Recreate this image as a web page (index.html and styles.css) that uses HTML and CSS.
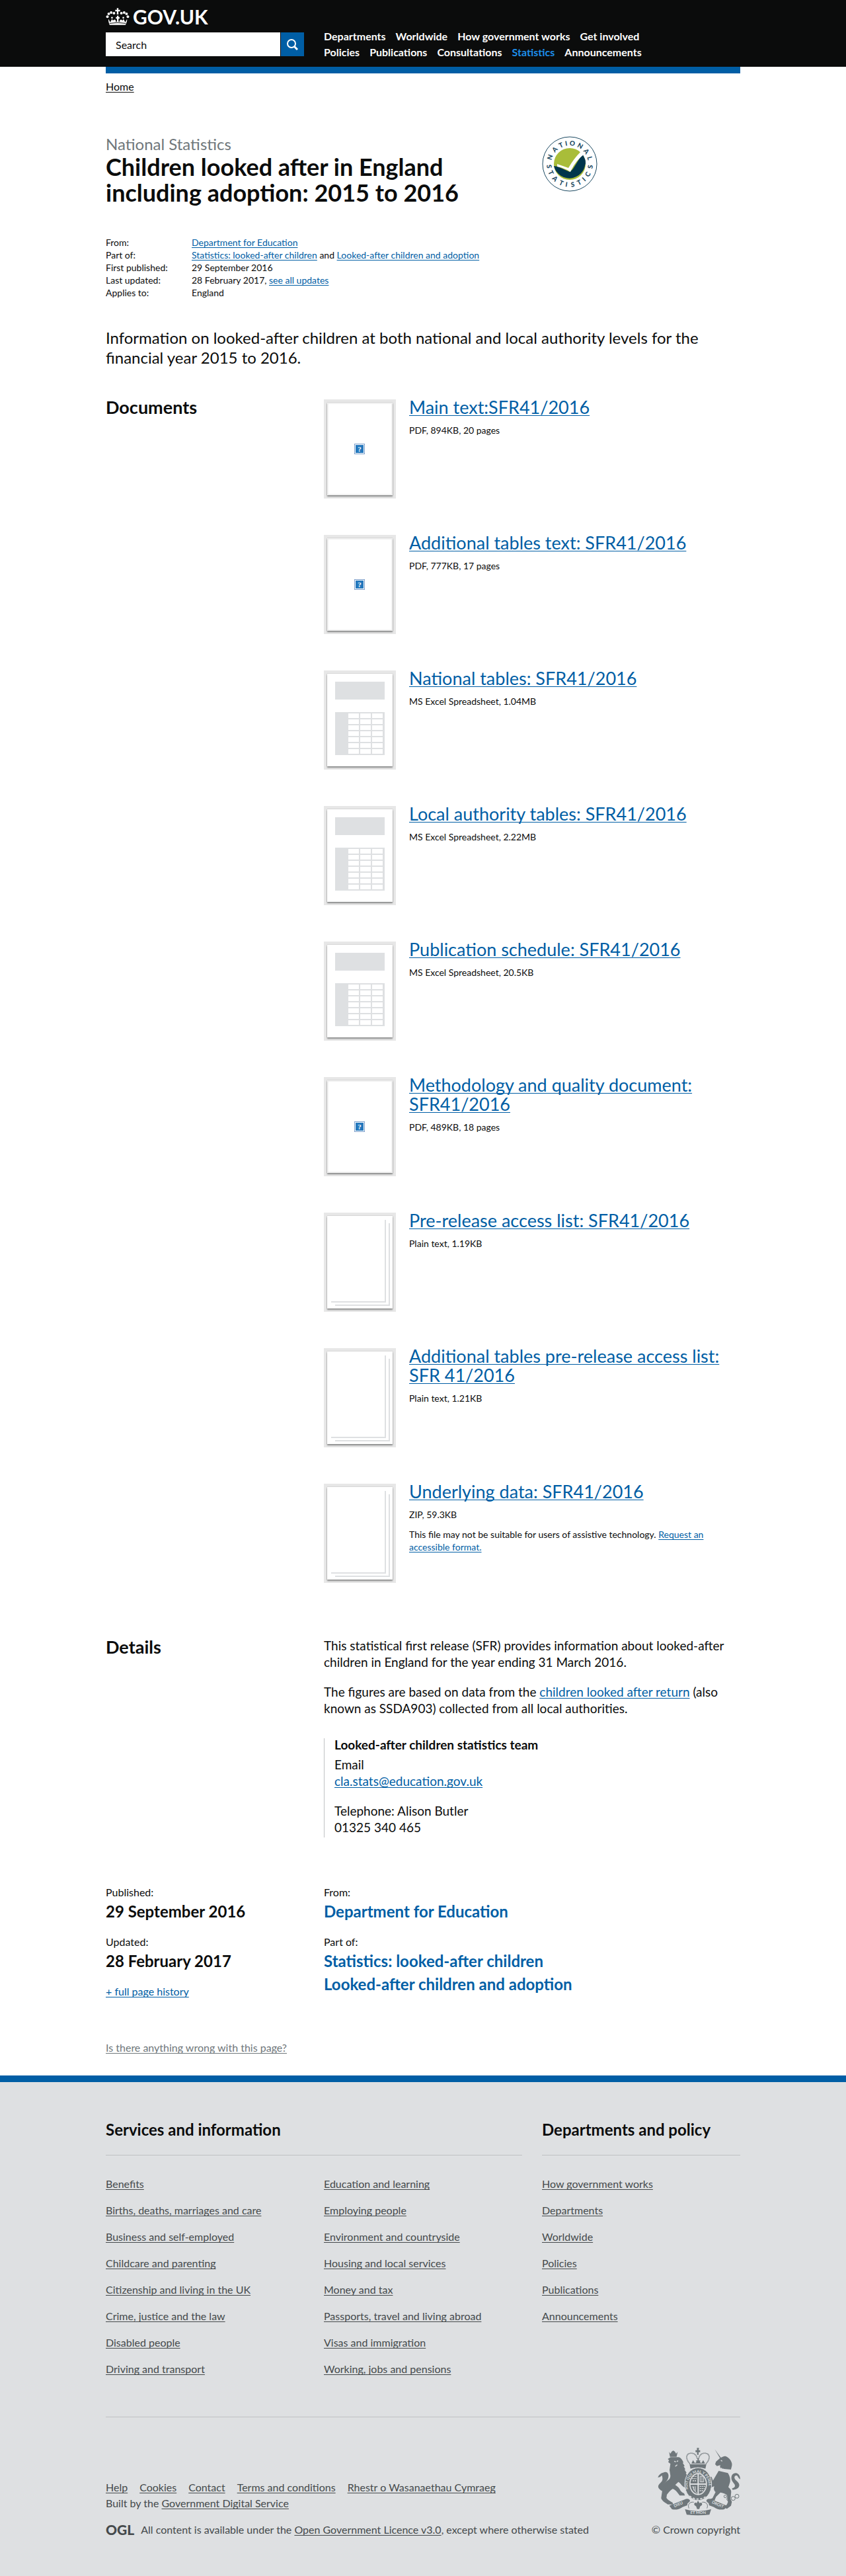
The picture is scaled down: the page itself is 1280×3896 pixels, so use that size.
FILE: index.html
```html
<!DOCTYPE html>
<html lang="en">
<head>
<meta charset="utf-8">
<meta name="viewport" content="width=device-width, initial-scale=1">
<title>Children looked after in England including adoption: 2015 to 2016 - GOV.UK</title>
<link rel="stylesheet" href="styles.css">
</head>
<body>
<header class="site-header">
  <div class="container site-header-grid">
    <div>
      <a class="site-logo" href="#">
        <svg class="site-crown" viewBox="30 36 108 79" aria-hidden="true">
          <g fill="#fff">
            <path d="M42 87l8 15 8-15 4 7 8-5 6 5-2 5 7 0V85h-5v-7h5v-6h7v6h5v7h-5v14h7l-2-5 6-5 8 5 4-7 8 15 8-15c2 8-3 19-7 27H47C44 106 40 95 42 87z"/>
            <path d="M80 37h8l-1 7h8v8h-8l1 14h-8l1-14h-8v-8h8z"/>
            <circle cx="37" cy="76" r="6"/><circle cx="43" cy="63" r="6"/><circle cx="54" cy="57" r="6"/><circle cx="67" cy="60" r="6"/>
            <circle cx="101" cy="60" r="6"/><circle cx="114" cy="57" r="6"/><circle cx="125" cy="63" r="6"/><circle cx="131" cy="76" r="6"/>
            <circle cx="58" cy="81" r="4"/><circle cx="110" cy="81" r="4"/>
          </g>
          <path d="M47 107q37-7 74 0" fill="none" stroke="#0b0c0c" stroke-width="3"/>
        </svg>
        <span>GOV.UK</span>
      </a>
      <form class="search" role="search">
        <input class="search-input" type="search" placeholder="Search" aria-label="Search">
        <button class="search-button" type="submit" aria-label="Search">
          <svg viewBox="0 0 17 17" width="17" height="17" aria-hidden="true"><circle cx="7" cy="7" r="6" fill="none" stroke="#fff" stroke-width="2"/><path d="M11 11l5 5" stroke="#fff" stroke-width="3"/></svg>
        </button>
      </form>
    </div>
    <nav class="site-nav" aria-label="Departments and policy">
      <a href="#">Departments</a>
      <a href="#">Worldwide</a>
      <a href="#">How government works</a>
      <a href="#">Get involved</a>
      <a href="#">Policies</a>
      <a href="#">Publications</a>
      <a href="#">Consultations</a>
      <a class="active" href="#">Statistics</a>
      <a href="#">Announcements</a>
    </nav>
  </div>
</header>

<main class="container">
  <div class="header-bar"></div>
  <nav class="breadcrumb" aria-label="Breadcrumb"><a href="#">Home</a></nav>

  <div class="columns title-block">
    <div class="span-two">
      <p class="context">National Statistics</p>
      <h1>Children looked after in England including adoption: 2015 to 2016</h1>
    </div>
    <svg class="stats-badge" viewBox="0 0 84 84" role="img" aria-label="National Statistics">
      <circle cx="42" cy="42" r="41" fill="#fff" stroke="#1c4a62" stroke-width="1"/>
      <circle cx="42" cy="42" r="24" fill="#a9bd39"/>
      <path d="M18 45L24 46L42 54L65 34A24 24 0 0 1 18 45z" fill="#00364c"/>
      <path d="M61 27A24 24 0 0 1 66 42L44 54z" fill="#00364c"/>
      <path d="M23 42L40 48Q48 34 59 23L64 27Q50 38 43 54Q34 48 23 46z" fill="#fff"/>
      <g class="badge-letters">
        <text x="42" y="14" transform="rotate(-71 42 42)">N</text>
        <text x="42" y="14" transform="rotate(-46 42 42)">A</text>
        <text x="42" y="14" transform="rotate(-25 42 42)">T</text>
        <text x="42" y="14" transform="rotate(-10 42 42)">I</text>
        <text x="42" y="14" transform="rotate(7 42 42)">O</text>
        <text x="42" y="14" transform="rotate(30 42 42)">N</text>
        <text x="42" y="14" transform="rotate(53 42 42)">A</text>
        <text x="42" y="14" transform="rotate(74 42 42)">L</text>
        <text x="42" y="77" transform="rotate(83 42 42)">S</text>
        <text x="42" y="77" transform="rotate(65 42 42)">T</text>
        <text x="42" y="77" transform="rotate(45 42 42)">A</text>
        <text x="42" y="77" transform="rotate(24 42 42)">T</text>
        <text x="42" y="77" transform="rotate(9 42 42)">I</text>
        <text x="42" y="77" transform="rotate(-8 42 42)">S</text>
        <text x="42" y="77" transform="rotate(-27 42 42)">T</text>
        <text x="42" y="77" transform="rotate(-43 42 42)">I</text>
        <text x="42" y="77" transform="rotate(-60 42 42)">C</text>
        <text x="42" y="77" transform="rotate(-82 42 42)">S</text>
      </g>
    </svg>
  </div>

  <dl class="metadata">
    <dt>From:</dt><dd><a href="#">Department for Education</a></dd>
    <dt>Part of:</dt><dd><a href="#">Statistics: looked-after children</a> and <a href="#">Looked-after children and adoption</a></dd>
    <dt>First published:</dt><dd>29 September 2016</dd>
    <dt>Last updated:</dt><dd>28 February 2017, <a href="#">see all updates</a></dd>
    <dt>Applies to:</dt><dd>England</dd>
  </dl>

  <p class="summary">Information on looked-after children at both national and local authority levels for the financial year 2015 to 2016.</p>

  <svg class="symbols" aria-hidden="true">
    <symbol id="missing" viewBox="0 0 99 140">
      <rect x="1" y="1" width="97" height="138" fill="none" stroke="#e3e3e3"/>
      <rect x="41.500" y="62.500" width="15" height="15" fill="#fff" stroke="#7c9fcb"/>
      <rect x="43" y="64" width="12" height="12" fill="#2478bd"/>
      <text x="49" y="74" text-anchor="middle" class="missing-mark">?</text>
    </symbol>
    <symbol id="sheet" viewBox="0 0 99 140">
      <path fill="#dee0e2" d="M12 12h75v27H12zM12 58h75v65H12z"/>
      <path fill="none" stroke="#fff" stroke-width="7" stroke-dasharray="16 2" d="M32 63.500h53M32 72.500h53M32 81.500h53M32 90.500h53M32 99.500h53M32 108.500h53M32 117.500h53"/>
    </symbol>
    <symbol id="pages" viewBox="0 0 99 140">
      <path fill="none" stroke="#dee0e2" stroke-width="2" d="M88 6v124H6M94 11v124H12"/>
    </symbol>
  </svg>

  <section class="columns">
    <h2>Documents</h2>
    <div class="span-two documents">
      <article class="document">
        <a class="thumb" href="#" aria-label="Main text"><svg><use href="#missing"/></svg></a>
        <div><h3><a href="#">Main text:SFR41/2016</a></h3><p>PDF, 894KB, 20 pages</p></div>
      </article>
      <article class="document">
        <a class="thumb" href="#" aria-label="Additional tables text"><svg><use href="#missing"/></svg></a>
        <div><h3><a href="#">Additional tables text: SFR41/2016</a></h3><p>PDF, 777KB, 17 pages</p></div>
      </article>
      <article class="document">
        <a class="thumb" href="#" aria-label="National tables"><svg><use href="#sheet"/></svg></a>
        <div><h3><a href="#">National tables: SFR41/2016</a></h3><p>MS Excel Spreadsheet, 1.04MB</p></div>
      </article>
      <article class="document">
        <a class="thumb" href="#" aria-label="Local authority tables"><svg><use href="#sheet"/></svg></a>
        <div><h3><a href="#">Local authority tables: SFR41/2016</a></h3><p>MS Excel Spreadsheet, 2.22MB</p></div>
      </article>
      <article class="document">
        <a class="thumb" href="#" aria-label="Publication schedule"><svg><use href="#sheet"/></svg></a>
        <div><h3><a href="#">Publication schedule: SFR41/2016</a></h3><p>MS Excel Spreadsheet, 20.5KB</p></div>
      </article>
      <article class="document">
        <a class="thumb" href="#" aria-label="Methodology and quality document"><svg><use href="#missing"/></svg></a>
        <div><h3><a href="#">Methodology and quality document: SFR41/2016</a></h3><p>PDF, 489KB, 18 pages</p></div>
      </article>
      <article class="document">
        <a class="thumb" href="#" aria-label="Pre-release access list"><svg><use href="#pages"/></svg></a>
        <div><h3><a href="#">Pre-release access list: SFR41/2016</a></h3><p>Plain text, 1.19KB</p></div>
      </article>
      <article class="document">
        <a class="thumb" href="#" aria-label="Additional tables pre-release access list"><svg><use href="#pages"/></svg></a>
        <div><h3><a href="#">Additional tables pre-release access list: SFR 41/2016</a></h3><p>Plain text, 1.21KB</p></div>
      </article>
      <article class="document">
        <a class="thumb" href="#" aria-label="Underlying data"><svg><use href="#pages"/></svg></a>
        <div><h3><a href="#">Underlying data: SFR41/2016</a></h3><p>ZIP, 59.3KB</p><p>This file may not be suitable for users of assistive technology. <a href="#">Request an accessible format.</a></p></div>
      </article>
    </div>
  </section>

  <section class="columns details">
    <h2>Details</h2>
    <div class="span-two prose">
      <p>This statistical first release (SFR) provides information about looked-after children in England for the year ending 31 March 2016.</p>
      <p>The figures are based on data from the <a href="#">children looked after return</a> (also known as SSDA903) collected from all local authorities.</p>
      <div class="contact">
        <h3>Looked-after children statistics team</h3>
        <p>Email<br><a href="mailto:cla.stats@education.gov.uk">cla.stats@education.gov.uk</a></p>
        <p>Telephone: Alison Butler<br>01325 340 465</p>
      </div>
    </div>
  </section>

  <div class="columns published">
    <div>
      <dl>
        <dt>Published:</dt><dd>29 September 2016</dd>
        <dt>Updated:</dt><dd>28 February 2017</dd>
      </dl>
      <a class="history" href="#">+ full page history</a>
    </div>
    <dl class="span-two">
      <dt>From:</dt><dd><a href="#">Department for Education</a></dd>
      <dt>Part of:</dt><dd><a href="#">Statistics: looked-after children</a></dd><dd><a href="#">Looked-after children and adoption</a></dd>
    </dl>
  </div>

  <p class="report"><a href="#">Is there anything wrong with this page?</a></p>
</main>

<footer class="site-footer">
  <div class="container">
    <div class="columns footer-top">
      <section class="span-two">
        <h2>Services and information</h2>
        <div class="footer-lists">
          <ul>
            <li><a href="#">Benefits</a></li>
            <li><a href="#">Births, deaths, marriages and care</a></li>
            <li><a href="#">Business and self-employed</a></li>
            <li><a href="#">Childcare and parenting</a></li>
            <li><a href="#">Citizenship and living in the UK</a></li>
            <li><a href="#">Crime, justice and the law</a></li>
            <li><a href="#">Disabled people</a></li>
            <li><a href="#">Driving and transport</a></li>
          </ul>
          <ul>
            <li><a href="#">Education and learning</a></li>
            <li><a href="#">Employing people</a></li>
            <li><a href="#">Environment and countryside</a></li>
            <li><a href="#">Housing and local services</a></li>
            <li><a href="#">Money and tax</a></li>
            <li><a href="#">Passports, travel and living abroad</a></li>
            <li><a href="#">Visas and immigration</a></li>
            <li><a href="#">Working, jobs and pensions</a></li>
          </ul>
        </div>
      </section>
      <section>
        <h2>Departments and policy</h2>
        <ul>
          <li><a href="#">How government works</a></li>
          <li><a href="#">Departments</a></li>
          <li><a href="#">Worldwide</a></li>
          <li><a href="#">Policies</a></li>
          <li><a href="#">Publications</a></li>
          <li><a href="#">Announcements</a></li>
        </ul>
      </section>
    </div>
    <div class="footer-meta">
      <div>
        <nav class="footer-links" aria-label="Support links">
          <a href="#">Help</a>
          <a href="#">Cookies</a>
          <a href="#">Contact</a>
          <a href="#">Terms and conditions</a>
          <a href="#">Rhestr o Wasanaethau Cymraeg</a>
        </nav>
        <p class="built">Built by the <a href="#">Government Digital Service</a></p>
        <p class="licence">
          <span class="ogl">OGL</span>
          <span>All content is available under the <a href="#">Open Government Licence v3.0</a>, except where otherwise stated</span>
        </p>
      </div>
      <a class="copyright" href="#">
        <svg class="crest" viewBox="45 60 375 312" aria-hidden="true">
          <g fill="#6f777b">
            <!-- lion -->
            <path d="M97 82l6 8 6-10 7-4 7 4 6 10 7-8-5 22H101z"/>
            <path d="M104 106l38 0c10 4 16 14 20 24l-3 2 9 14-5 1 8 14-4 1 9 14-3 4 10 12 0 16-14-2c4 10 2 20 4 30 4 10-8 8-14 2-8-8-12-16-20-20l-14 14c10 6 20 16 24 26 4 6 10 10 16 12l4 10-24 0c-10-14-18-26-32-30-10 6-20 18-26 26l-2 14c4 8 18 16 28 22l2 8-24 0c-14-8-26-16-30-28l4-28c0-20 2-34 14-44 14-10 24-14 24-30l-4-26 4-28-10-8 4-8-6-6z"/>
            <path d="M62 258c-18-12-18-22-6-34 12-10 14-20 8-36l-8 8-10 2c4-12 14-20 24-22 12-6 22-2 24 10 2 14-4 24-14 34-6 6-12 16-10 24l14-6 0 8c-8 6-14 12-22 12z"/>
            <!-- unicorn -->
            <path d="M304 70l28 38c8-4 16-8 22-6 10 4 22 14 26 26 6 12 0 22-2 34l-44-4c-8-4-6-12-4-16l-16 4-8-8 4-12 18-16z"/>
            <path d="M322 168l42 10c8 14 12 24 10 40l-8 24c8 6 16 14 12 30l-2 24 6 12-4 18-18 14-12-4c6-8 12-14 16-26l-4-32c-10-8-20-10-30-12l-20 20-8 20-20 2-8-8 20-8 14-28c-10-8-8-18-6-26l-16 6-10-14-16 0 6-14-18-10 6-10 16 4 4-8 16 4 6 16z"/>
            <path d="M386 254c22 0 34-14 28-28-6-12-18-16-20-26-2-8 6-14 12-10l8 12 6 4c0-16-8-26-20-28-14 0-22 12-20 26 2 16 18 22 16 34-2 6-8 8-14 10z"/>
            <!-- crown -->
            <path d="M223 64h10l-2 10h7v9h-7v12h-7V83h-7v-9h7zM190 138h76l-4 20c-22-8-46-8-68 0z"/>
            <path d="M198 135l8-16 8 14 7-4-2-8h7v-9h6v9h7l-2 8 7 4 8-14 8 16z"/>
            <!-- motto ribbons -->
            <path d="M98 326l70-28c10-6 22-4 24 6-4 10-14 8-12 20l-22 8c-16 12-34 14-48 10z"/>
            <path d="M360 326l-70-28c-10-6-22-4-24 6 4 10 14 8 12 20l22 8c16 12 34 14 48 10z"/>
            <path d="M169 342q59 18 119 0l-8 25q-50 6-103 0z"/>
            <path d="M228 303l8 12c4-6 14-2 10 8l-8 6-4 12h-10l-4-12-8-6c-4-10 6-14 10-8z"/>
          </g>
          <g fill="none" stroke="#6f777b" stroke-width="5">
            <path d="M192 136c-20-20-20-44 0-48 16-2 30 6 33 26M264 136c20-20 20-44 0-48-16-2-30 6-33 26" stroke-dasharray="4 2"/>
            <circle cx="366" cy="296" r="7" stroke-width="3"/><circle cx="352" cy="284" r="6" stroke-width="3"/><circle cx="388" cy="293" r="9" stroke-width="3"/><circle cx="405" cy="283" r="9" stroke-width="3"/>
            <path d="M187 338c-8-20 6-30 22-28M269 338c8-20-6-30-22-28" stroke-width="3"/>
          </g>
          <path d="M318 150l52 22" stroke="#dee0e2" stroke-width="5" stroke-dasharray="5 3" fill="none"/>
          <path d="M120 124l8 3M138 122l-6 4M134 140l-9 8M332 120l6 4" stroke="#dee0e2" stroke-width="4"/>
          <ellipse cx="229" cy="228" rx="61" ry="74" fill="#6f777b" stroke="#dee0e2" stroke-width="3"/>
          <ellipse cx="229" cy="228" rx="40" ry="50" fill="#dee0e2"/>
          <ellipse cx="229" cy="228" rx="35" ry="45" fill="#6f777b"/>
          <path id="garter" d="M183 254A48 60 0 1 1 275 254" fill="none"/>
          <text class="garter-text"><textPath href="#garter" startOffset="2">SOIT QUI MAL Y PENSE</textPath></text>
          <g stroke="#dee0e2" fill="none">
            <path d="M229 180v96M193 228h72" stroke-width="6"/>
            <path d="M202 203h20M204 213h18M206 193h16M236 238h24M236 248h22M236 258h16" stroke-width="4" stroke-dasharray="6 3"/>
            <path d="M238 192h16v26h-16zM203 238q12 28 20 30M209 238v18M216 238v24M246 192v26" stroke-width="3"/>
            <path d="M190 282q38 28 78 0" stroke-width="5" stroke-dasharray="10 7"/>
          </g>
          <g class="motto">
            <text x="229" y="362">ET MON</text>
            <text x="139" y="326" transform="rotate(-23 139 320)">DIEU</text>
            <text x="318" y="326" transform="rotate(23 318 320)">DROIT</text>
          </g>
        </svg>
        <span>© Crown copyright</span>
      </a>
    </div>
  </div>
</footer>
</body>
</html>
```
FILE: styles.css
```css
* { box-sizing: border-box; }

body {
  margin: 0;
  background: #fff;
  color: #0b0c0c;
  font-family: Lato, "Liberation Sans", sans-serif;
  font-size: 16px;
  line-height: 20px;
}

h1, h2, h3, p, dl, dd, ul { margin: 0; padding: 0; }
ul { list-style: none; }

a {
  color: #005ea5;
  text-decoration-thickness: 1px;
  text-underline-offset: 2px;
  text-decoration-skip-ink: none;
}

.container {
  max-width: 1020px;
  margin: 0 auto;
  padding: 0 30px;
}

.columns {
  display: grid;
  grid-template-columns: repeat(3, 1fr);
  column-gap: 30px;
  align-items: start;
}
.span-two { grid-column: span 2; }

/* Header */
.site-header {
  background: #0b0c0c;
  padding: 12px 0 10px;
}
.site-header-grid {
  display: grid;
  grid-template-columns: 300px 1fr;
  column-gap: 30px;
}
.site-logo {
  display: flex;
  align-items: center;
  gap: 5px;
  margin-bottom: 11px;
  color: #fff;
  font-size: 30px;
  font-weight: 700;
  line-height: 26px;
  text-decoration: none;
}
.site-crown { width: 36px; height: 26px; }
.search { display: flex; gap: 1px; }
.search-input {
  flex: 1;
  min-width: 0;
  height: 36px;
  padding: 0 15px;
  border: 0;
  border-radius: 0;
  background: #fff;
  color: #0b0c0c;
  font: inherit;
  appearance: none;
}
.search-input::placeholder { color: #0b0c0c; opacity: 1; }
.search-button {
  display: flex;
  align-items: center;
  justify-content: center;
  width: 35px;
  height: 36px;
  padding: 0;
  border: 0;
  background: #005ea5;
}
.site-nav {
  display: flex;
  flex-wrap: wrap;
  align-content: flex-start;
  column-gap: 15px;
  max-width: 520px;
  padding-top: 31px;
  font-weight: 700;
  line-height: 24px;
}
.site-nav a { color: #fff; text-decoration: none; }
.site-nav .active { color: #1d8feb; }

.header-bar { height: 10px; background: #005ea5; }
.breadcrumb { margin-top: 10px; }
.breadcrumb a { color: #0b0c0c; }

/* Title */
.title-block { margin-top: 62px; }
.context { color: #6f777b; font-size: 24px; line-height: 30px; }
h1 { font-size: 36px; line-height: 39px; }
.stats-badge { width: 84px; height: 84px; margin-top: 3px; }
.badge-letters {
  fill: #1c4a62;
  font-size: 10px;
  font-weight: 900;
  text-anchor: middle;
}

.metadata {
  display: grid;
  grid-template-columns: 130px 1fr;
  margin-top: 46px;
  font-size: 14px;
  line-height: 19px;
}

.summary { margin: 44px 0 45px; font-size: 24px; line-height: 30px; }

/* Documents */
h2 { font-size: 27px; line-height: 29px; }
.symbols { display: none; }
.documents { display: grid; row-gap: 52px; }
.document { display: flex; gap: 20px; font-size: 14px; line-height: 19px; }
.document h3 { font-size: 27px; font-weight: 400; line-height: 29px; }
.document p { margin-top: 11px; }
.thumb {
  flex: none;
  margin-top: 3px;
  padding: 5px;
  background: #e7e7e7;
}
.thumb svg {
  display: block;
  width: 99px;
  height: 140px;
  background: #fff;
  box-shadow: 0 2px 2px rgba(11, 12, 12, 0.4), 0 0 1px rgba(11, 12, 12, 0.4);
}
.missing-mark {
  fill: #fff;
  font: 700 11px "Liberation Serif", serif;
}

/* Details */
.details { margin-top: 82px; }
.prose { font-size: 19px; line-height: 25px; }
.prose p + p { margin-top: 20px; }
.contact {
  margin-top: 33px;
  padding: 0 0 3px 15px;
  border-left: 1px solid #bfc1c3;
}
.contact h3 { margin-bottom: 7px; font-size: 19px; line-height: 20px; }

.published { margin-top: 73px; }
.published dd {
  margin-top: 4px;
  font-size: 24px;
  font-weight: 700;
  line-height: 30px;
}
.published dd + dd { margin-top: 5px; }
.published dd + dt { margin-top: 21px; }
.published dd a { text-decoration: none; }
.history { display: block; width: fit-content; margin-top: 21px; }

.report { margin: 65px 0 32px; }
.report a { color: #6f777b; }

/* Footer */
.site-footer {
  padding: 57px 0 61px;
  border-top: 10px solid #005ea5;
  background: #dee0e2;
  color: #454a4c;
}
.site-footer a { color: #454a4c; }
.site-footer h2 {
  margin-bottom: 33px;
  padding-bottom: 23px;
  border-bottom: 1px solid #bfc1c3;
  color: #0b0c0c;
  font-size: 24px;
  line-height: 30px;
}
.footer-lists { display: grid; grid-template-columns: 1fr 1fr; column-gap: 30px; }
.site-footer li + li { margin-top: 20px; }
.footer-meta {
  display: flex;
  justify-content: space-between;
  align-items: flex-end;
  margin-top: 62px;
  padding-top: 45px;
  border-top: 1px solid #bfc1c3;
}
.footer-links { display: flex; flex-wrap: wrap; column-gap: 18px; }
.built { margin-top: 4px; }
.licence { display: flex; align-items: center; gap: 10px; margin-top: 20px; }
.ogl {
  font-size: 21px;
  font-weight: 900;
}
.site-footer .copyright {
  display: flex;
  flex-direction: column;
  align-items: flex-end;
  gap: 11px;
  text-decoration: none;
}
.crest { width: 125px; height: 104px; }
.garter-text { fill: #dee0e2; font-size: 17px; font-weight: 700; }
.motto { fill: #dee0e2; font-size: 18px; font-weight: 700; text-anchor: middle; }
```
